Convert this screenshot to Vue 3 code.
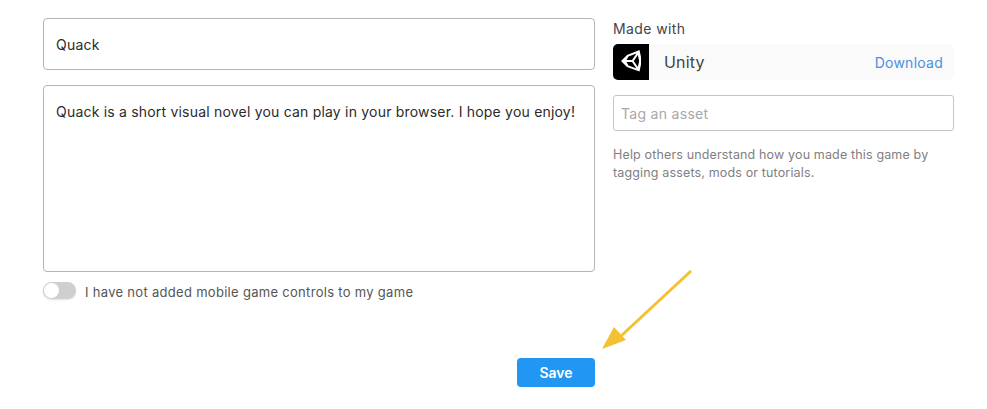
<script setup>
const title = 'Quack'
const description = 'Quack is a short visual novel you can play in your browser. I hope you enjoy!'
</script>

<template>
  <div class="page">
    <div class="columns">
      <div class="left">
        <div class="field title">{{ title }}</div>
        <div class="field desc">{{ description }}</div>
        <div class="toggle-row">
          <span class="toggle"><span class="knob"></span></span>
          <span class="toggle-label">I have not added mobile game controls to my game</span>
        </div>
      </div>
      <div class="right">
        <div class="made">Made with</div>
        <div class="engine">
          <span class="logo">
            <svg width="36" height="36" viewBox="0 0 36 36">
              <path fill="#fff" fill-rule="evenodd" d="M8 17 14 11 26.5 6 28 13 28 20.5 26.5 27.5 14 23ZM13.5 16 19 16 23.5 9.5 15.5 12.5ZM13.5 18 15.5 21.5 23.5 24.5 19 18ZM24.8 11 20.8 17 24.8 23 26.2 17Z"/>
            </svg>
          </span>
          <span class="engine-name">Unity</span>
          <a class="download">Download</a>
        </div>
        <div class="tag">Tag an asset</div>
        <p class="help">Help others understand how you made this game by tagging assets, mods or tutorials.</p>
      </div>
    </div>
    <div class="actions">
      <button class="save">Save</button>
    </div>
    <svg class="arrow" width="100" height="90" viewBox="0 0 100 90">
      <line x1="90" y1="1" x2="20" y2="66" stroke="#f2c232" stroke-width="3" />
      <polygon points="1,79 13,57 25,70" fill="#f2c232" />
    </svg>
  </div>
</template>

<style scoped>
.page {
  position: relative;
  width: 987px;
  height: 409px;
  box-sizing: border-box;
  padding: 18px 33px 0 43px;
  background: #fff;
  font-family: Inter, "Liberation Sans", sans-serif;
  color: #222;
  overflow: hidden;
}
.columns {
  display: flex;
  gap: 18px;
}
.left {
  width: 552px;
  display: flex;
  flex-direction: column;
}
.right {
  width: 341px;
}
.field {
  box-sizing: border-box;
  border: 1px solid #b5b5b5;
  border-radius: 4px;
  padding: 0 12px;
  font-size: 14px;
  letter-spacing: 0.2px;
  color: #2b2b2b;
}
.title {
  height: 52px;
  line-height: 51px;
}
.desc {
  height: 187px;
  margin-top: 15px;
  padding-top: 15px;
  line-height: 21px;
}
.toggle-row {
  display: flex;
  align-items: center;
  gap: 9px;
  margin-top: 9px;
  height: 18px;
}
.toggle {
  position: relative;
  display: block;
  width: 33px;
  height: 17px;
  border-radius: 9px;
  background: #cfcfcf;
  box-shadow: 0 1px 2px rgba(0, 0, 0, 0.12);
}
.knob {
  position: absolute;
  left: 1px;
  top: 1px;
  width: 15px;
  height: 15px;
  border-radius: 50%;
  background: #fff;
}
.toggle-label {
  font-size: 13px;
  letter-spacing: 0.3px;
  line-height: 18px;
  margin-top: 3px;
  color: #555;
}
.made {
  font-size: 14px;
  letter-spacing: 0.4px;
  line-height: 22px;
  color: #444;
}
.engine {
  display: flex;
  align-items: center;
  height: 36px;
  margin-top: 4px;
  background: #fafafa;
  border-radius: 6px;
}
.logo {
  display: flex;
  align-items: center;
  justify-content: center;
  width: 36px;
  height: 36px;
  background: #000;
  border-radius: 5px 0 0 5px;
}
.engine-name {
  flex: 1;
  margin-left: 15px;
  font-size: 16px;
  letter-spacing: 0.2px;
  color: #444;
}
.download {
  margin-right: 11px;
  font-size: 14px;
  letter-spacing: 0.25px;
  color: #4a90e2;
}
.tag {
  box-sizing: border-box;
  height: 36px;
  margin-top: 15px;
  padding: 0 7px;
  border: 1px solid #c4c4c4;
  border-radius: 3px;
  font-size: 14px;
  letter-spacing: 0.3px;
  line-height: 35px;
  color: #a8a8a8;
}
.help {
  margin: 15px 0 0;
  width: 335px;
  font-size: 12.5px;
  letter-spacing: 0.15px;
  line-height: 18px;
  color: #808080;
}
.actions {
  position: absolute;
  left: 517px;
  top: 358px;
}
.save {
  display: block;
  width: 78px;
  height: 29px;
  padding: 0;
  border: none;
  border-radius: 4px;
  background: #2196f3;
  color: #fff;
  font-family: inherit;
  font-size: 14px;
  font-weight: 600;
}
.arrow {
  position: absolute;
  left: 601px;
  top: 270px;
}
</style>
